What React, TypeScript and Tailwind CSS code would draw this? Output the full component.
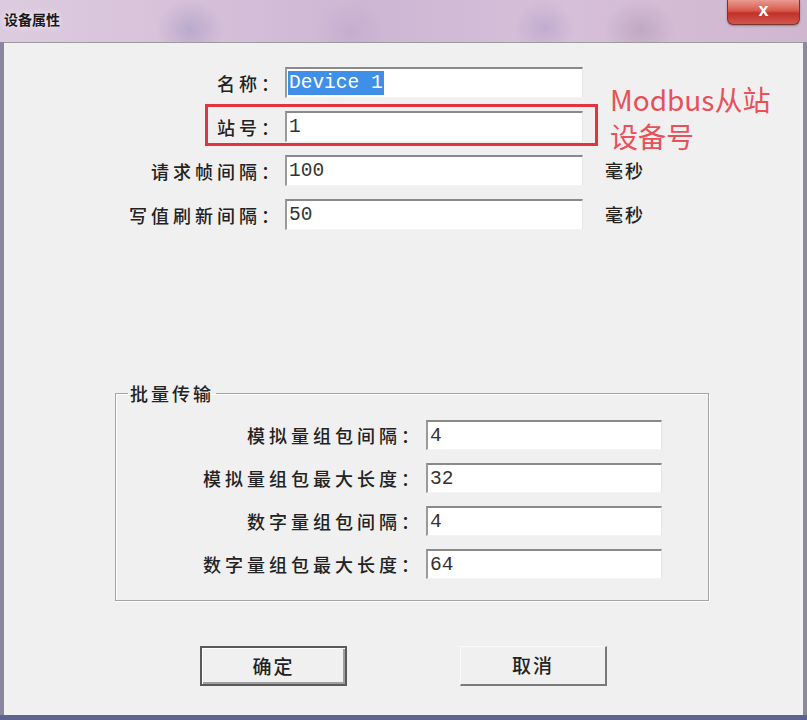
import type { ReactNode } from 'react';

const cjk = "font-['Noto_Sans_CJK_SC','Noto_Sans',sans-serif]";
const mono = "font-['Liberation_Mono','Courier_New',monospace]";

function Field({ value, width, height, selected }: { value: string; width: string; height: string; selected?: boolean }) {
    return (
        <div
            className={`${width} ${height} flex items-center bg-white border-t-2 border-l-2 border-t-[#8a8a8a] border-l-[#9a9a9a] border-b border-r border-b-[#f4f4f4] border-r-[#e6e6e6] pl-[1px] ${mono} text-[19.5px] text-[#333]`}
        >
            {selected ? (
                <span className="bg-[#3f8fe8] text-white leading-[24px] px-[1px]">{value}</span>
            ) : (
                <span className="leading-[24px] px-[1px]">{value}</span>
            )}
        </div>
    );
}

function Label({ children, width }: { children: ReactNode; width: string }) {
    return (
        <div className={`${width} shrink-0 text-right ${cjk} text-[18px] font-medium tracking-[4px] text-[#222] leading-[26px]`}>
            {children}
        </div>
    );
}

function TopRow({ label, value, unit, selected }: { label: string; value: string; unit?: string; selected?: boolean }) {
    return (
        <div className="flex items-center">
            <Label width="w-[279px]">{label}</Label>
            <div className="ml-[2px]">
                <Field value={value} width="w-[298px]" height="h-[31px]" selected={selected} />
            </div>
            {unit && (
                <span className={`ml-[22px] ${cjk} text-[18px] font-medium tracking-[2px] text-[#222]`}>{unit}</span>
            )}
        </div>
    );
}

function GroupRow({ label, value }: { label: string; value: string }) {
    return (
        <div className="flex items-center">
            <Label width="w-[307px]">{label}</Label>
            <div className="ml-[3px]">
                <Field value={value} width="w-[236px]" height="h-[30px]" />
            </div>
        </div>
    );
}

function Button({ children, isDefault }: { children: ReactNode; isDefault?: boolean }) {
    return (
        <button
            className={`h-[40px] w-[147px] bg-[#f0f0f0] ${cjk} text-[19px] font-medium tracking-[2px] text-[#222] ${
                isDefault
                    ? 'border-2 border-[#5a5a5a] shadow-[inset_1px_1px_0_#fff,inset_-2px_-2px_0_#a0a0a0]'
                    : 'border-t border-l border-t-[#fafafa] border-l-[#fafafa] border-b-2 border-r-2 border-b-[#7a7a7a] border-r-[#7a7a7a]'
            }`}
        >
            {children}
        </button>
    );
}

export default function App() {
    return (
        <div className="w-[807px] h-[720px] flex flex-col bg-[#8d87a4] overflow-hidden">
            {/* Title bar */}
            <div className="h-[42px] shrink-0 flex items-start justify-between bg-[radial-gradient(ellipse_34px_30px_at_190px_30px,rgba(110,110,170,0.28),transparent),radial-gradient(ellipse_34px_30px_at_350px_32px,rgba(160,130,200,0.18),transparent),radial-gradient(ellipse_30px_28px_at_545px_28px,rgba(120,110,180,0.22),transparent),radial-gradient(ellipse_36px_30px_at_640px_30px,rgba(110,90,120,0.2),transparent),linear-gradient(90deg,#dccbdf_0%,#d8c2da_20%,#cdb6d3_45%,#d6bfd8_70%,#cfb7cf_100%)]">
                <span className={`mt-[9px] ml-[4px] ${cjk} text-[14px] font-bold text-[#1a1a1a] [text-shadow:0_0_6px_#fff]`}>
                    设备属性
                </span>
                <div className="mr-[7px] w-[73px] h-[25px] rounded-b-[6px] border border-t-0 border-[#7a3530] bg-[linear-gradient(180deg,#e89a90_0%,#d8584a_45%,#c0322a_55%,#d2564a_100%)] flex items-center justify-center shadow-[0_1px_2px_rgba(0,0,0,0.3)]">
                    <span className="font-['Liberation_Sans',sans-serif] text-[18px] font-bold text-white leading-none -mt-[4px]">x</span>
                </div>
            </div>

            <div className="flex-1 flex">
                <div className="w-[4px] bg-[#8a86a0]" />

                {/* Client area */}
                <div className="relative flex-1 bg-[#f0f0f0] border-t border-[#9c9c9c] flex flex-col">
                    <div className="mt-[24px] flex flex-col gap-[13px]">
                        <TopRow label="名称：" value="Device 1" selected />
                        <TopRow label="站号：" value="1" />
                        <TopRow label="请求帧间隔：" value="100" unit="毫秒" />
                        <TopRow label="写值刷新间隔：" value="50" unit="毫秒" />
                    </div>

                    {/* Annotation */}
                    <div className="absolute left-[201px] top-[61px] w-[393px] h-[42px] border-[3px] border-[#e2343e]" />
                    <div className={`absolute left-[606px] top-[38px] ${cjk} text-[28px] leading-[37px] text-[#e8505a]`}>
                        Modbus从站
                        <br />
                        设备号
                    </div>

                    {/* Batch transfer group */}
                    <fieldset className="mt-[150px] ml-[111px] w-[594px] border border-[#a4a4a4] shadow-[inset_1px_1px_0_#fff,1px_1px_0_#fff] pt-[14px] pb-[21px]">
                        <legend className={`ml-[12px] px-[2px] ${cjk} text-[18px] font-medium tracking-[3px] text-[#222] leading-[26px]`}>
                            批量传输
                        </legend>
                        <div className="flex flex-col gap-[13px]">
                            <GroupRow label="模拟量组包间隔：" value="4" />
                            <GroupRow label="模拟量组包最大长度：" value="32" />
                            <GroupRow label="数字量组包间隔：" value="4" />
                            <GroupRow label="数字量组包最大长度：" value="64" />
                        </div>
                    </fieldset>

                    <div className="mt-[45px] pl-[196px] flex gap-[113px]">
                        <Button isDefault>确定</Button>
                        <Button>取消</Button>
                    </div>
                </div>

                <div className="w-[4px] bg-[#8d8aa0]" />
            </div>
            <div className="h-[5px] shrink-0 bg-[#5c6490]" />
        </div>
    );
}
